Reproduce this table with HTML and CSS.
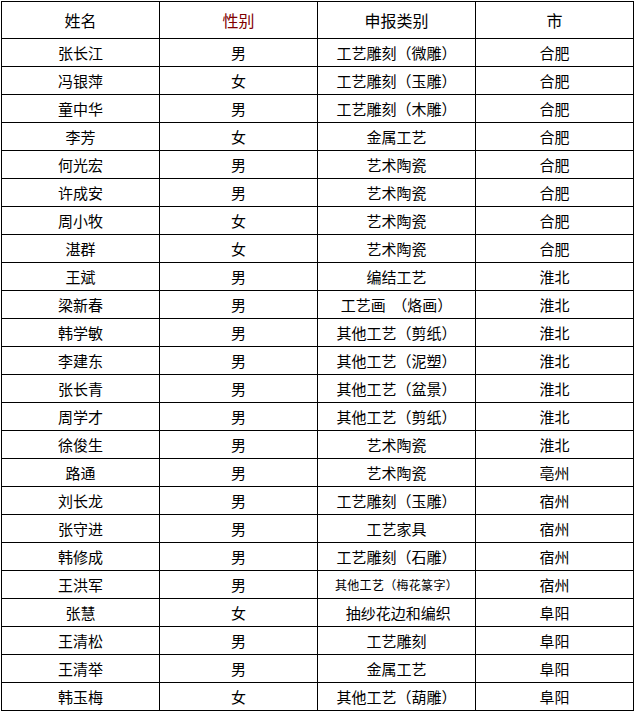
FILE: index.html
```html
<!DOCTYPE html>
<html lang="zh-CN">
<head>
<meta charset="utf-8">
<title>名单</title>
<link rel="stylesheet" href="styles.css">
</head>
<body>
<div class="wrap">
<table class="roster">
  <colgroup><col class="c"><col class="c"><col class="c"><col class="c"></colgroup>
  <thead>
    <tr class="head"><th>姓名</th><th class="red">性别</th><th>申报类别</th><th>市</th></tr>
  </thead>
  <tbody>
    <tr><td>张长江</td><td>男</td><td>工艺雕刻（微雕）</td><td>合肥</td></tr>
    <tr><td>冯银萍</td><td>女</td><td>工艺雕刻（玉雕）</td><td>合肥</td></tr>
    <tr><td>童中华</td><td>男</td><td>工艺雕刻（木雕）</td><td>合肥</td></tr>
    <tr><td>李芳</td><td>女</td><td>金属工艺</td><td>合肥</td></tr>
    <tr><td>何光宏</td><td>男</td><td>艺术陶瓷</td><td>合肥</td></tr>
    <tr><td>许成安</td><td>男</td><td>艺术陶瓷</td><td>合肥</td></tr>
    <tr><td>周小牧</td><td>女</td><td>艺术陶瓷</td><td>合肥</td></tr>
    <tr><td>湛群</td><td>女</td><td>艺术陶瓷</td><td>合肥</td></tr>
    <tr><td>王斌</td><td>男</td><td>编结工艺</td><td>淮北</td></tr>
    <tr><td>梁新春</td><td>男</td><td>工艺画&nbsp;&nbsp;（烙画）</td><td>淮北</td></tr>
    <tr><td>韩学敏</td><td>男</td><td>其他工艺（剪纸）</td><td>淮北</td></tr>
    <tr><td>李建东</td><td>男</td><td>其他工艺（泥塑）</td><td>淮北</td></tr>
    <tr><td>张长青</td><td>男</td><td>其他工艺（盆景）</td><td>淮北</td></tr>
    <tr><td>周学才</td><td>男</td><td>其他工艺（剪纸）</td><td>淮北</td></tr>
    <tr><td>徐俊生</td><td>男</td><td>艺术陶瓷</td><td>淮北</td></tr>
    <tr><td>路通</td><td>男</td><td>艺术陶瓷</td><td>亳州</td></tr>
    <tr><td>刘长龙</td><td>男</td><td>工艺雕刻（玉雕）</td><td>宿州</td></tr>
    <tr><td>张守进</td><td>男</td><td>工艺家具</td><td>宿州</td></tr>
    <tr><td>韩修成</td><td>男</td><td>工艺雕刻（石雕）</td><td>宿州</td></tr>
    <tr><td>王洪军</td><td>男</td><td><span class="small">其他工艺（梅花篆字）</span></td><td>宿州</td></tr>
    <tr><td>张慧</td><td>女</td><td>&nbsp;抽纱花边和编织</td><td>阜阳</td></tr>
    <tr><td>王清松</td><td>男</td><td>工艺雕刻</td><td>阜阳</td></tr>
    <tr><td>王清举</td><td>男</td><td>金属工艺</td><td>阜阳</td></tr>
    <tr><td>韩玉梅</td><td>女</td><td>其他工艺（葫雕）</td><td>阜阳</td></tr>
  </tbody>
</table>
</div>
</body>
</html>
```

FILE: styles.css
```css
html, body {
  margin: 0;
  padding: 0;
  background: #ffffff;
}
.wrap {
  padding: 1px 0 0 1px;
}
.roster {
  border-collapse: collapse;
  table-layout: fixed;
  width: 633px;
  font-family: "Noto Sans CJK SC", "Noto Sans", sans-serif;
  font-size: 15px;
  color: #000000;
}
.roster .c {
  width: 158px;
}
.roster th,
.roster td {
  border: 1px solid #000000;
  padding: 0;
  text-align: center;
  vertical-align: middle;
  line-height: 20px;
  white-space: nowrap;
}
.roster th {
  font-weight: normal;
  font-size: 16px;
  height: 36px;
}
.roster td {
  height: 27px;
}
.roster th.red {
  color: #800000;
}
.roster .small {
  font-size: 12px;
  letter-spacing: 0.3px;
}
```
